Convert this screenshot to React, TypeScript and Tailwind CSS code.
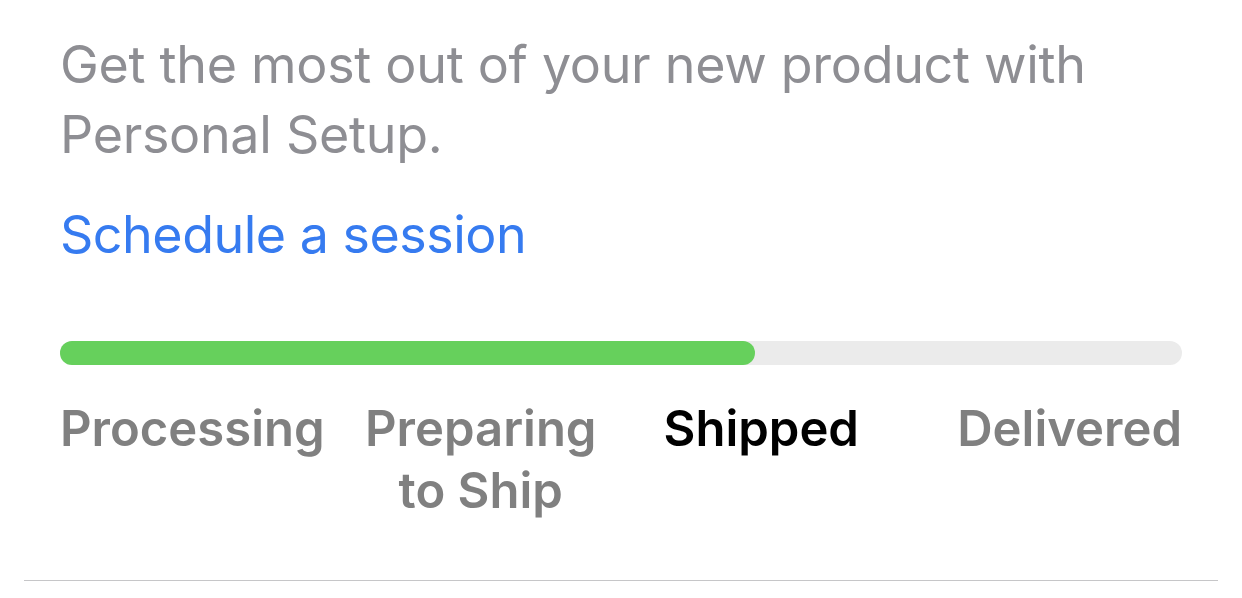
export default function App() {
  const steps = ["Processing", "Preparing to Ship", "Shipped", "Delivered"];
  const current = 2;
  const progress = 61.9;

  return (
    <div className="w-[1242px] h-[598px] bg-white font-['Inter','Noto_Sans',sans-serif] overflow-hidden">
      <div className="px-[60px] pt-[30px]">
        <p className="text-[52px] leading-[70px] text-[#8e8e93] tracking-[-0.3px]">
          Get the most out of your new product with Personal Setup.
        </p>
        <p className="mt-[30px] text-[52px] leading-[70px] text-[#367bf0] tracking-[-0.5px]">
          Schedule a session
        </p>

        <div className="mt-[71px] h-6 w-full rounded-full bg-[#ebebeb]">
          <div
            className="h-full rounded-full bg-[#66d05c]"
            style={{ width: `${progress}%` }}
          />
        </div>

        <div className="mt-[33px] grid grid-cols-4 text-[49px] leading-[62px] font-semibold">
          {steps.map((s, i) => (
            <div
              key={s}
              className={
                (i === 0 ? "text-left " : i === steps.length - 1 ? "text-right " : "text-center ") +
                (i === current ? "text-black" : "text-[#808080]")
              }
            >
              {s === "Preparing to Ship" ? (
                <>
                  Preparing
                  <br />
                  to Ship
                </>
              ) : (
                s
              )}
            </div>
          ))}
        </div>
      </div>
      <div className="mx-[24px] mt-[58px] border-t border-[#c6c6c8]" />
    </div>
  );
}
